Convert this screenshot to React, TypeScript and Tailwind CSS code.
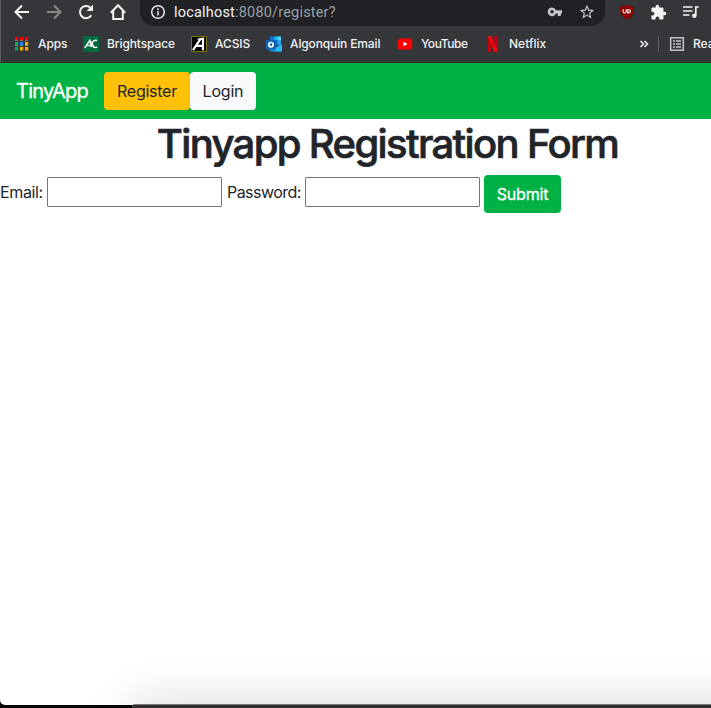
import type { ReactNode } from "react";

const toolIcon = "h-[18px] w-[18px] shrink-0";

function BackIcon() {
  return (
    <svg className={toolIcon} viewBox="0 0 18 18" fill="none" stroke="#f1f3f4" strokeWidth="2">
      <path d="M16 9H3M9 2.500 2.500 9 9 15.500" />
    </svg>
  );
}

function ForwardIcon() {
  return (
    <svg className={toolIcon} viewBox="0 0 18 18" fill="none" stroke="#86888a" strokeWidth="2">
      <path d="M2 9h13M9 2.500 15.500 9 9 15.500" />
    </svg>
  );
}

function ReloadIcon() {
  return (
    <svg className={toolIcon} viewBox="0 0 18 18">
      <path d="M14.300 12.300A6.100 6.100 0 1 1 13.300 4.700" fill="none" stroke="#f1f3f4" strokeWidth="2" />
      <path d="M16 1.600V8H9.600Z" fill="#f1f3f4" />
    </svg>
  );
}

function HomeIcon() {
  return (
    <svg className={toolIcon} viewBox="0 0 18 18" fill="none" stroke="#f1f3f4" strokeWidth="2">
      <path d="M1.800 9.700 9 2.300l7.200 7.400M4.200 8v8h9.600V8" />
    </svg>
  );
}

function InfoIcon() {
  return (
    <svg className="h-4 w-4 shrink-0" viewBox="0 0 16 16" fill="none" stroke="#e8eaed" strokeWidth="1.500">
      <circle cx="8" cy="8" r="6.300" />
      <path d="M8 7v4.500M8 4.300v1.600" />
    </svg>
  );
}

function KeyIcon() {
  return (
    <svg className="h-4 w-4 shrink-0" viewBox="0 0 16 16" fill="#c4c6c9">
      <path fillRule="evenodd" d="M5 3.500a4.300 4.300 0 0 1 4 2.700h6V9.500h-1.200V12h-3V9.500H9A4.300 4.300 0 1 1 5 3.500ZM5 6.100a1.700 1.700 0 1 0 0 3.400 1.700 1.700 0 0 0 0-3.400Z" />
    </svg>
  );
}

function StarIcon() {
  return (
    <svg className="h-4 w-4 shrink-0" viewBox="1 1 22 22" fill="#c4c6c9">
      <path d="M22 9.240l-7.190-.62L12 2 9.190 8.630 2 9.240l5.460 4.730L5.820 21 12 17.270 18.180 21l-1.630-7.030L22 9.240zM12 15.400l-3.760 2.270 1-4.280-3.320-2.880 4.380-.38L12 6.100l1.710 4.040 4.380.38-3.320 2.880 1 4.280L12 15.400z" />
    </svg>
  );
}

function ShieldIcon() {
  return (
    <svg className="h-4 w-4 shrink-0" viewBox="0 0 16 16">
      <path d="M8 .5c2 1.400 4.200 2 7 2.100.2 5.900-1 10.200-7 13-6-2.800-7.200-7.100-7-13C3.800 2.500 6 1.900 8 .5Z" fill="#8c0000" />
      <path d="M4.200 5.200v2.300c0 2 3 2 3 0V5.200" fill="none" stroke="#fff" strokeWidth="1.100" />
      <path d="M8.800 5.700h1a1.600 1.600 0 0 1 0 3.200h-1Z" fill="none" stroke="#fff" strokeWidth="1.100" />
    </svg>
  );
}

function PuzzleIcon() {
  return (
    <svg className="h-[17px] w-[17px] shrink-0" viewBox="0 0 24 24" fill="#f1f3f4">
      <path d="M20.500 11H19V7c0-1.100-.9-2-2-2h-4V3.500a2.500 2.500 0 0 0-5 0V5H4c-1.100 0-1.990.9-1.990 2v3.800H3.500c1.490 0 2.700 1.210 2.700 2.700s-1.210 2.700-2.700 2.700H2V20c0 1.100.9 2 2 2h3.800v-1.500c0-1.490 1.210-2.700 2.700-2.700s2.700 1.210 2.700 2.700V22H17c1.100 0 2-.9 2-2v-4h1.500a2.500 2.500 0 0 0 0-5z" />
    </svg>
  );
}

function QueueIcon() {
  return (
    <svg className="h-4 w-[18px] shrink-0" viewBox="0 0 18 16" fill="none" stroke="#f1f3f4" strokeWidth="1.700">
      <path d="M1 3h9.500M1 7h9.500M1 11h6.500M16.800 3h-3v8.500" />
      <circle cx="12.300" cy="11.800" r="2.200" fill="#f1f3f4" stroke="none" />
    </svg>
  );
}

const appColors = [
  "#ff0000", "#ff0000", "#ff0000",
  "#00a859", "#1a84ff", "#ffab00",
  "#00a859", "#ffab00", "#ffab00",
];

function AppsIcon() {
  return (
    <svg className="h-4 w-4" viewBox="0 0 16 16">
      {appColors.map((color, i) => (
        <rect key={i} x={1 + (i % 3) * 5} y={1 + Math.floor(i / 3) * 5} width="3.200" height="3.500" fill={color} />
      ))}
      <path d="M1 4.600h3.200M6 4.600h3.200M11 4.600h3.200M1 9.600h3.200M6 9.600h3.200M11 9.600h3.200" stroke="#b5b5b5" strokeWidth=".5" />
    </svg>
  );
}

function BrightspaceIcon() {
  return (
    <svg className="h-4 w-4" viewBox="0 0 16 16">
      <path d="M0 0h16v16H0z" fill="#006b3f" />
      <path d="M1.800 12 6.800 4.300 8.300 11M4 9.500h4M14.300 4.500c-2.900-.8-5 .8-5.200 3.600-.1 3 2.200 4 5.200 3M6.800 4.300l4.500 7.200" fill="none" stroke="#f0f5ef" strokeWidth="1.500" />
    </svg>
  );
}

function AcsisIcon() {
  return (
    <svg className="h-4 w-4" viewBox="0 0 16 16">
      <path d="M.5.5h15v15H.5z" fill="#000" stroke="#7d7a00" />
      <path d="M2 14.200 9.500 3 12 2.700v11.500M5 9.800h7" fill="none" stroke="#fff" strokeWidth="2.200" />
      <path d="M9.500 2.800 6.500 3.200" stroke="#fff" strokeWidth="1.300" />
    </svg>
  );
}

function OutlookIcon() {
  return (
    <svg className="h-4 w-4" viewBox="0 0 16 16">
      <path d="M4 .5h11v9H4z" fill="#0a74cf" />
      <path d="M8 .5h3.500v4H8z" fill="#28a8ea" />
      <path d="M11.500.5H15v4h-3.500z" fill="#50d9ff" />
      <path d="M8 4.500h3.500v4H8z" fill="#0078d4" />
      <path d="M11.500 4.500H15v4h-3.500z" fill="#28a8ea" />
      <path d="M3 8.500 9 12l7-4v7.500H4.500L3 14Z" fill="#1490df" />
      <path d="m16 8-9 5 3 2.500h6Z" fill="#28b7ef" />
      <rect y="4" width="10" height="9.500" rx=".7" fill="#0f64b9" />
      <ellipse cx="5" cy="8.700" rx="2.100" ry="2.200" fill="none" stroke="#fff" strokeWidth="1.700" />
    </svg>
  );
}

function YouTubeIcon() {
  return (
    <svg className="h-4 w-4" viewBox="0 0 16 16">
      <rect x=".8" y="2.500" width="14.400" height="11" rx="2.500" fill="#f00" />
      <path d="m6.500 5.800 4 2.200-4 2.200Z" fill="#fff" />
    </svg>
  );
}

function NetflixIcon() {
  return (
    <svg className="h-4 w-4" viewBox="0 0 16 16">
      <path d="M3 0h3.300v16H3ZM9.300 0h3.300v16H9.300Z" fill="#c0060f" />
      <path d="M3 0h3.300l6.300 16H9.300Z" fill="#f00610" />
    </svg>
  );
}

function ReadingListIcon() {
  return (
    <svg className="h-4 w-4 shrink-0" viewBox="0 0 16 16" fill="none" stroke="#c4c6c9" strokeWidth="1.500">
      <path d="M1.700 1.700h12.600v12.600H1.700zM4 5h2M7 5h5M4 8h2M7 8h5M4 11h2M7 11h5" />
    </svg>
  );
}

function Bookmark({ icon, label, className }: { icon: ReactNode; label: string; className: string }) {
  return (
    <a className={`flex shrink-0 items-center gap-2 whitespace-nowrap ${className}`}>
      {icon}
      <span>{label}</span>
    </a>
  );
}

function BrowserChrome() {
  return (
    <header className="h-[63px] overflow-hidden border-b border-l border-b-[#292a2d] border-l-[#58595c] bg-[#35363a] text-[#f1f3f4]">
      <div className="flex h-[26px] items-start">
        <div className="flex gap-[14px] pt-[3px] pl-3">
          <BackIcon />
          <ForwardIcon />
          <ReloadIcon />
          <HomeIcon />
        </div>
        <div className="-mt-[2px] ml-[13px] flex h-7 w-[465px] shrink-0 items-center rounded-b-[14px] bg-[#202124] pr-[10px] pl-[10px]">
          <InfoIcon />
          <span className="ml-2 pt-[2px] font-[Roboto] text-[14.500px] leading-5 tracking-[0.190px] text-[#9aa0a6]">
            <span className="text-[#f1f3f4]">localhost</span>:8080/register?
          </span>
          <div className="ml-auto flex gap-4">
            <KeyIcon />
            <StarIcon />
          </div>
        </div>
        <div className="ml-[14px] flex gap-[15px] pt-1">
          <ShieldIcon />
          <PuzzleIcon />
          <QueueIcon />
        </div>
      </div>
      <nav className="flex h-9 items-center pl-[13px] font-[Inter] text-[12px] font-medium">
        <Bookmark icon={<AppsIcon />} label="Apps" className="w-[69px] tracking-[-0.1px]" />
        <Bookmark icon={<BrightspaceIcon />} label="Brightspace" className="w-[108px] tracking-[-0.1px]" />
        <Bookmark icon={<AcsisIcon />} label="ACSIS" className="w-[75px] tracking-[-0.1px]" />
        <Bookmark icon={<OutlookIcon />} label="Algonquin Email" className="w-[131px] tracking-[-0.130px]" />
        <Bookmark icon={<YouTubeIcon />} label="YouTube" className="w-[88px] tracking-[-0.450px]" />
        <Bookmark icon={<NetflixIcon />} label="Netflix" className="w-[154px]" />
        <svg className="h-3 w-3 shrink-0" viewBox="0 0 12 12" fill="none" stroke="#e8eaed" strokeWidth="1.600">
          <path d="m1.500 3 3 3-3 3M5.500 3l3 3-3 3" />
        </svg>
        <div className="mr-[10px] ml-[7px] h-4 w-px shrink-0 bg-[#5f6063]" />
        <ReadingListIcon />
        <span className="ml-2 whitespace-nowrap">Rea</span>
      </nav>
    </header>
  );
}

export default function App() {
  return (
    <div className="flex h-[708px] w-[711px] flex-col overflow-hidden bg-[#050609] font-[Inter] text-[#212529]">
      <BrowserChrome />
      <main className="h-[642px] shrink-0 overflow-hidden rounded-bl-[5px] bg-white">
        <nav className="flex h-14 items-center bg-[#00b245] pl-4">
          <a className="w-[88px] text-[20px] leading-[30px] tracking-[-0.780px] text-white [-webkit-text-stroke:0.3px_white]">TinyApp</a>
          <button className="h-[38px] w-[86px] rounded bg-[#ffc107] text-[16px] tracking-[-0.250px]">Register</button>
          <button className="h-[38px] w-[66px] rounded bg-[#f8f9fa] text-[16px] tracking-[-0.2px]">Login</button>
        </nav>
        <h1 className="mb-[7px] ml-[64px] pt-px text-center text-[40px] leading-[48px] font-medium tracking-[-1.640px] whitespace-nowrap [-webkit-text-stroke:0.7px_#212529]">
          Tinyapp Registration Form
        </h1>
        <form className="flex h-[38px] items-center text-[16px]" onSubmit={(e) => e.preventDefault()}>
          <label htmlFor="email" className="-mt-[4px] w-[47px] tracking-[-0.350px] whitespace-nowrap">Email:</label>
          <input id="email" type="email" className="-mt-[4px] h-[30px] w-[175px] rounded-[1px] border border-[#767676]" />
          <label htmlFor="password" className="-mt-[4px] ml-[5px] w-[78px] tracking-[-0.550px] whitespace-nowrap">Password:</label>
          <input id="password" type="password" className="-mt-[4px] h-[30px] w-[175px] rounded-[1px] border border-[#767676]" />
          <button className="ml-1 h-[38px] w-[77px] rounded bg-[#00b245] tracking-[-0.150px] text-white [-webkit-text-stroke:0.3px_white]">Submit</button>
        </form>
      </main>
      <footer className="relative h-[3px]">
        <div className="absolute -top-px right-[-60px] left-[132px] h-[100px] rounded-tl-[3px] border-t border-[#777] bg-[#332e34] shadow-[0_0_50px_rgba(0,0,0,0.16)]" />
      </footer>
    </div>
  );
}
